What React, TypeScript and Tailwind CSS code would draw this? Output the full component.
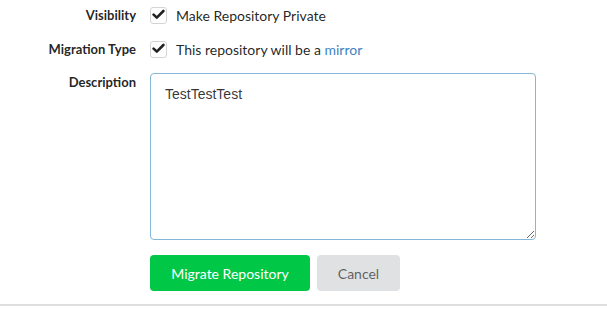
import React from "react"

function Check() {
  return (
    <span className="flex h-[17px] w-[17px] shrink-0 items-center justify-center rounded-[3px] border border-[#d4d4d5] bg-white">
      <svg width="13" height="11" viewBox="0 0 13 11" className="-mt-[2px]">
        <path d="M1.6 5.6 L4.8 8.6 L11.4 2" fill="none" stroke="#222" strokeWidth="2.6" strokeLinecap="round" strokeLinejoin="round" />
      </svg>
    </span>
  )
}

export default function App() {
  return (
    <div className="h-[309px] w-[607px] bg-white font-['Lato','Liberation_Sans',sans-serif] text-[14px] text-[rgba(0,0,0,0.87)]">
      <div className="border-b-2 border-[#dedede] pb-[13px] pt-[7px]">
        {/* visibility */}
        <div className="flex items-center">
          <label className="w-[136px] text-right text-[13px] font-bold leading-[17px]">Visibility</label>
          <div className="ml-[14px] flex items-center">
            <Check />
            <span className="ml-[9px] leading-[17px]">Make Repository Private</span>
          </div>
        </div>

        {/* migration type */}
        <div className="mt-[17px] flex items-center">
          <label className="w-[136px] text-right text-[13px] font-bold leading-[17px]">Migration Type</label>
          <div className="ml-[14px] flex items-center">
            <Check />
            <span className="ml-[9px] leading-[17px]">
              This repository will be a <a className="text-[#4183c4]">mirror</a>
            </span>
          </div>
        </div>

        {/* description */}
        <div className="mt-[15px] flex items-start">
          <label className="mt-[1px] w-[136px] text-right text-[13px] font-bold leading-[17px]">Description</label>
          <textarea
            defaultValue="TestTestTest"
            className="ml-[14px] h-[167px] w-[386px] rounded-[4px] border border-[#85b7d9] px-[14px] py-[11px] font-['Liberation_Sans',Arial,sans-serif] text-[14px] leading-[18px] text-[rgba(0,0,0,0.8)] outline-none"
          />
        </div>

        <div className="ml-[150px] mt-[15px] flex gap-[7px]">
          <button className="h-[36px] w-[160px] rounded-[4px] bg-[#00c846] text-[14px] text-white">Migrate Repository</button>
          <button className="h-[36px] w-[83px] rounded-[4px] bg-[#e0e1e2] text-[14px] text-[rgba(0,0,0,0.6)]">Cancel</button>
        </div>
      </div>
    </div>
  )
}
